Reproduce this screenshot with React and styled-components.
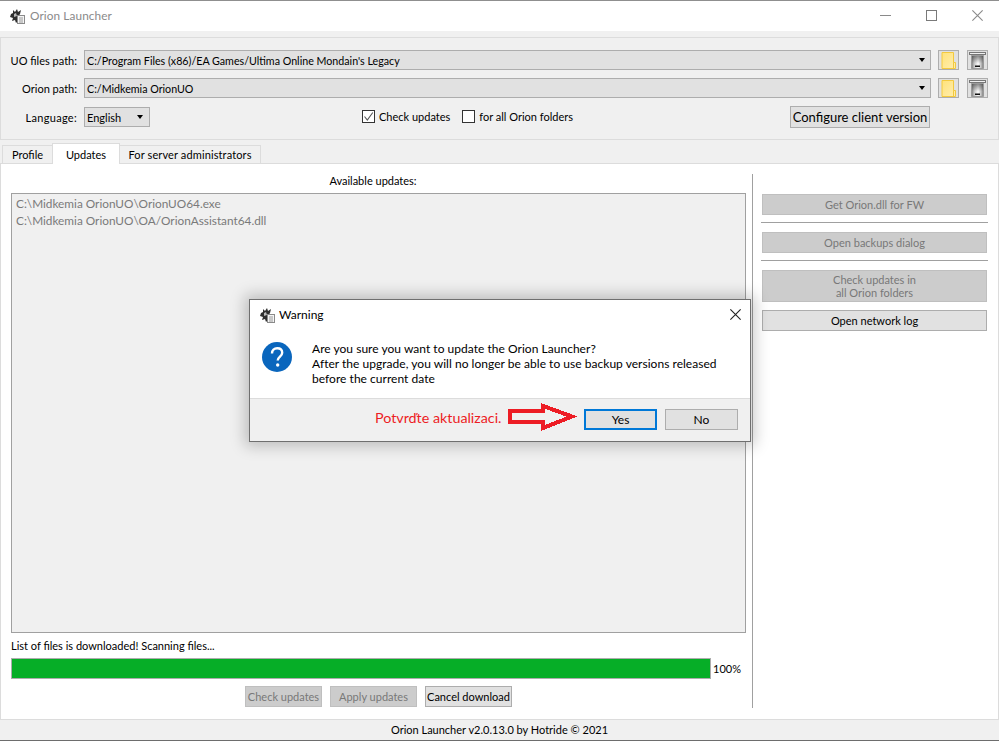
import React from "react";
import styled, { createGlobalStyle } from "styled-components";

const Global = createGlobalStyle`
  html, body { margin: 0; padding: 0; background: #f0f0f0; }
  body { font-family: "Lato", "Open Sans", "Liberation Sans", sans-serif; font-size: 11px; color: #000; }
  * { box-sizing: border-box; }
`;

const Win = styled.div`
  position: relative; width: 999px; height: 741px; display: flex; flex-direction: column;
  background: #f0f0f0; overflow: hidden; border-top: 1px solid #8f8f8f; border-bottom: 1px solid #6d6d6d;
`;
const TitleBar = styled.div`
  height: 30px; background: #fff; display: flex; align-items: center; padding-left: 10px; flex: none;
`;
const TitleText = styled.span`
  margin-left: 5px; font-size: 11.8px; color: #8a8a8a; margin-top: -1px; letter-spacing: .1px;
`;
const WinControls = styled.div`
  margin-left: auto; margin-right: -1px; display: flex; align-items: center; margin-top: -2px;
`;
const WinBtn = styled.div`
  width: 46px; height: 30px; display: flex; align-items: center; justify-content: center;
`;
const TopPanel = styled.div`
  flex: none; margin-top: 6px; height: 103px; border: 1px solid #dcdcdc;
  padding: 12px 10px 0 0; display: flex; flex-direction: column; gap: 8px;
`;
const Row = styled.div`
  display: flex; align-items: center; height: 20px;
`;
const LangRow = styled(Row)`
  height: 22px; position: relative;
`;
const Label = styled.label`
  width: 76px; text-align: right; flex: none; margin-right: 7px; white-space: nowrap;
  letter-spacing: ${p => p.$track || 0}px;
`;
const Combo = styled.div`
  flex: 1; height: 20px; background: #e1e1e1; border: 1px solid #adadad; display: flex; align-items: center;
  padding: 0 5px 0 2px; white-space: nowrap;
`;
const PathText = styled.span`
  font-size: 10.7px; line-height: 15px; padding-top: 1px;
`;
const LangCombo = styled(Combo)`
  flex: none; width: 66px; height: 20px; padding-right: 6px;
`;
const Arrow = styled.span`
  margin-left: auto; width: 0; height: 0; border-left: 3.5px solid transparent; border-right: 3.5px solid transparent;
  border-top: 4px solid #000;
`;
const IconBtn = styled.div`
  width: 21px; height: 20px; background: #e1e1e1; border: 1px solid #adadad; flex: none; margin-left: ${p => p.$gap}px;
  display: flex; align-items: center; justify-content: center;
`;
const Check = styled.div`
  display: flex; align-items: center; gap: 4px; white-space: nowrap; margin-left: ${p => p.$gap}px; margin-bottom: 2px;
`;
const Box = styled.span`
  width: 13px; height: 13px; background: #fff; border: 1px solid #333; display: flex; align-items: center; justify-content: center;
`;
const Configure = styled.div`
  margin-left: auto; margin-right: 58px; width: 140px; height: 22px; background: #e1e1e1; border: 1px solid #adadad;
  display: flex; align-items: center; justify-content: center; font-size: 13px; white-space: nowrap;
`;
const Tabs = styled.div`
  flex: none; display: flex; align-items: flex-end; height: 24px; padding-left: 2px; position: relative; z-index: 1; margin-bottom: -1px;
`;
const Tab = styled.div`
  height: ${p => (p.$active ? 21 : 19)}px; width: ${p => p.$w}px; display: flex; align-items: center; justify-content: center;
  background: ${p => (p.$active ? "#fff" : "#f0f0f0")}; border: 1px solid #dcdcdc; white-space: nowrap;
  margin-left: ${p => (p.$first ? 0 : -1)}px; letter-spacing: ${p => p.$track || 0}px;
  ${p => (p.$active ? "border-bottom: none; z-index: 1;" : "")}
`;
const Panel = styled.div`
  flex: none; height: 557px; background: #fff; border: 1px solid #dcdcdc; display: grid;
  grid-template-columns: 752px 1fr;
`;
const Left = styled.div`
  padding: 0 6px 0 10px; display: flex; flex-direction: column; border-right: 1px solid #a0a0a0; margin: 10px 0 11px;
`;
const Caption = styled.div`
  text-align: center; height: 19px; line-height: 14px; padding-right: 11px;
`;
const FileList = styled.div`
  height: 440px; background: #f0f0f0; border: 1px solid #a0a0a0; padding: 1px 4px; color: #7a7a7a; font-size: 11.8px; line-height: 17px; flex: none;
`;
const Status = styled.div`
  height: 25px; line-height: 14px; padding-top: 6px; white-space: nowrap; flex: none;
`;
const ProgressRow = styled.div`
  display: flex; align-items: center; gap: 2px; height: 21px; flex: none;
`;
const ProgressTrack = styled.div`
  width: 700px; height: 21px; border: 1px solid #adadad; background: #e6e6e6;
`;
const ProgressFill = styled.div`
  height: 100%; background: #06ae27;
`;
const Actions = styled.div`
  display: flex; justify-content: flex-start; padding-left: 234px; gap: 8px; margin-top: 7px; flex: none;
`;
const Btn = styled.div`
  height: ${p => p.$h || 21}px; width: ${p => p.$w ? p.$w + "px" : "auto"};
  margin-top: ${p => p.$top || 0}px;
  background: ${p => (p.$off ? "#cccccc" : "#e1e1e1")}; border: 1px solid ${p => (p.$off ? "#bfbfbf" : "#adadad")};
  color: ${p => (p.$off ? "#787878" : "#000")}; line-height: 13px; display: flex; align-items: center; justify-content: center;
  text-align: center; white-space: nowrap; flex: none;
`;
const Right = styled.div`
  padding: 30px 11px 0 9px; display: flex; flex-direction: column;
`;
const Rule = styled.div`
  height: 1px; background: #a0a0a0; margin: 7px -1px 9px;
`;
const Footer = styled.div`
  flex: 1; display: flex; align-items: center; justify-content: center; padding-bottom: 1px;
`;
const Dialog = styled.div`
  position: absolute; left: 249px; top: 298px; width: 502px; height: 143px; background: #fff; border: 1px solid #6f6f6f;
  box-shadow: 0 0 14px 4px rgba(0,0,0,.22); display: flex; flex-direction: column; z-index: 5;
`;
const DlgTitle = styled.div`
  height: 30px; display: flex; align-items: center; padding-left: 10px; flex: none;
`;
const DlgTitleText = styled.span`margin-left: 4px; font-size: 12px; margin-top: -1px;`;
const DlgClose = styled.div`
  margin-left: auto; margin-right: 9px; display: flex; margin-top: -2px;
`;
const DlgBody = styled.div`
  flex: 1; display: flex; padding: 12px 12px 0 12px;
`;
const Msg = styled.div`
  margin-left: 20px; font-size: 12px; letter-spacing: .03px; line-height: 15px; white-space: pre-line; margin-top: -1px;
`;
const DlgFoot = styled.div`
  height: 43px; flex: none; background: #f0f0f0; border-top: 1px solid #dcdcdc; display: flex; align-items: center; padding-left: 125px; position: relative;
`;
const Note = styled.span`
  color: #ed1c24; font-size: 14.3px; white-space: nowrap; width: 209px; flex: none; margin-top: -5px;
`;
const DlgBtn = styled.div`
  width: 73px; height: 21px; background: #e1e1e1; border: ${p => (p.$focus ? "2px solid #0078d7" : "1px solid #adadad")};
  display: flex; align-items: center; justify-content: center; font-size: 12px; margin-left: ${p => p.$gap}px; margin-top: -1px;
`;
const ArrowMark = styled.svg`
  position: absolute; left: 258px; top: 3px;
`;

const AppIcon = () => (
  <svg width="15" height="15" viewBox="0 0 15 15" style={{ flex: "none" }}>
    <path d="M1 5 L3 4 L3 1 L5 3 L7 0 L8 3 L11 1 L10 5 L8 8 L8 12 L6 14 L5 11 L2 12 L3 9 L0 8 Z" fill="#2e2e2e" />
    <path d="M4 5 L6 4 L7 7 L4 8 Z" fill="#b9b9b9" />
    <rect x="7.5" y="6.5" width="7" height="8" fill="#f4f4f4" stroke="#8a8a8a" />
    <path d="M9 9h4M9 11h4M9 13h4" stroke="#9a9a9a" strokeWidth="1" />
  </svg>
);
const Folder = ({ id }) => (
  <svg width="15" height="17" viewBox="0 0 15 17">
    <defs>
      <linearGradient id={id} x1="0" x2="1" y1="0" y2="1">
        <stop offset="0" stopColor="#ffe27a" />
        <stop offset="1" stopColor="#ffeeb0" />
      </linearGradient>
    </defs>
    <path d="M1 .5H12.5V10.5H14.5V16.5H1Z" fill={`url(#${id})`} stroke="#f3c93e" />
    <path d="M12.5 10.5V16.5" stroke="#f3c93e" />
  </svg>
);
const Trash = ({ id }) => (
  <svg width="17" height="17" viewBox="0 0 17 17">
    <defs>
      <linearGradient id={id} x1="0" x2="1" y1="0" y2="0">
        <stop offset="0" stopColor="#777" />
        <stop offset=".22" stopColor="#c4c4c4" />
        <stop offset=".55" stopColor="#fcfcfc" />
        <stop offset=".8" stopColor="#c0c0c0" />
        <stop offset="1" stopColor="#777" />
      </linearGradient>
      <linearGradient id={`${id}s`} x1="0" x2="0" y1="0" y2="1">
        <stop offset="0" stopColor="#333" stopOpacity=".55" />
        <stop offset=".6" stopColor="#333" stopOpacity="0" />
      </linearGradient>
    </defs>
    <rect x=".5" y=".5" width="16" height="2" fill="#efefef" stroke="#777" />
    <path d="M2.5 3.5H14.5V16.500H2.5Z" fill={`url(#${id})`} stroke="#9a9a9a" />
    <rect x="3" y="4" width="11" height="12" fill={`url(#${id}s)`} />
    <rect x="6" y="13.500" width="5" height="1.500" fill="#111" />
  </svg>
);
const Cross = ({ c, s }) => (
  <svg width={s} height={s} viewBox="0 0 10 10"><path d="M.3.3 9.7 9.7M9.7.3.3 9.7" stroke={c} strokeWidth="1" fill="none" /></svg>
);

export default function App() {
  return (
    <Win>
      <Global />
      <TitleBar>
        <AppIcon />
        <TitleText>Orion Launcher</TitleText>
        <WinControls>
          <WinBtn><svg width="11" height="1"><rect width="11" height="1" fill="#8a8a8a" /></svg></WinBtn>
          <WinBtn><svg width="11" height="11"><rect x=".5" y=".5" width="10" height="10" fill="none" stroke="#7a7a7a" /></svg></WinBtn>
          <WinBtn><Cross c="#8a8a8a" s={11} /></WinBtn>
        </WinControls>
      </TitleBar>
      <TopPanel>
        <Row>
          <Label>UO files path:</Label>
          <Combo><PathText>C:/Program Files (x86)/EA Games/Ultima Online Mondain's Legacy</PathText><Arrow /></Combo>
          <IconBtn $gap={7}><Folder id="f1" /></IconBtn>
          <IconBtn $gap={8}><Trash id="t1" /></IconBtn>
        </Row>
        <Row>
          <Label>Orion path:</Label>
          <Combo><PathText>C:/Midkemia OrionUO</PathText><Arrow /></Combo>
          <IconBtn $gap={7}><Folder id="f2" /></IconBtn>
          <IconBtn $gap={8}><Trash id="t2" /></IconBtn>
        </Row>
        <LangRow>
          <Label $track={0.3}>Language:</Label>
          <LangCombo>English<Arrow /></LangCombo>
          <Check $gap={212}>
            <Box><svg width="11" height="11" viewBox="0 0 11 11"><path d="M1.5 5.5 4.3 9 9.8 1.5" fill="none" stroke="#555" strokeWidth="1.1" /></svg></Box>
            Check updates
          </Check>
          <Check $gap={12}><Box />for all Orion folders</Check>
          <Configure>Configure client version</Configure>
        </LangRow>
      </TopPanel>
      <Tabs>
        <Tab $w={51} $first>Profile</Tab>
        <Tab $w={68} $active>Updates</Tab>
        <Tab $w={142} $track={0.12}>For server administrators</Tab>
      </Tabs>
      <Panel>
        <Left>
          <Caption>Available updates:</Caption>
          <FileList>
            C:\Midkemia OrionUO\OrionUO64.exe<br />
            C:\Midkemia OrionUO\OA/OrionAssistant64.dll
          </FileList>
          <Status>List of files is downloaded! Scanning files...</Status>
          <ProgressRow>
            <ProgressTrack><ProgressFill style={{ width: "100%" }} /></ProgressTrack>
            100%
          </ProgressRow>
          <Actions>
            <Btn $off $w={77}>Check updates</Btn>
            <Btn $off $w={87}>Apply updates</Btn>
            <Btn $w={87}>Cancel download</Btn>
          </Actions>
        </Left>
        <Right>
          <Btn $off>Get Orion.dll for FW</Btn>
          <Rule />
          <Btn $off>Open backups dialog</Btn>
          <Rule />
          <Btn $off $h={32}>Check updates in<br />all Orion folders</Btn>
          <Btn $top={8}>Open network log</Btn>
        </Right>
      </Panel>
      <Footer>Orion Launcher v2.0.13.0 by Hotride © 2021</Footer>
      <Dialog>
        <DlgTitle>
          <AppIcon />
          <DlgTitleText>Warning</DlgTitleText>
          <DlgClose><Cross c="#222" s={11} /></DlgClose>
        </DlgTitle>
        <DlgBody>
          <svg width="30" height="30" viewBox="0 0 30 30" style={{ flex: "none" }}>
            <circle cx="15" cy="15" r="15" fill="#0a66bd" />
            <path d="M10 11.500c0-3.200 2.200-5.200 5.200-5.200s5 1.800 5 4.500c0 3.700-4.500 4-4.500 7.800" fill="none" stroke="#fff" strokeWidth="2.400" />
            <circle cx="15.700" cy="23" r="1.700" fill="#fff" />
          </svg>
          <Msg>{"Are you sure you want to update the Orion Launcher?\nAfter the upgrade, you will no longer be able to use backup versions released\nbefore the current date"}</Msg>
        </DlgBody>
        <DlgFoot>
          <Note>Potvrďte aktualizaci.</Note>
          <DlgBtn $focus $gap={0}>Yes</DlgBtn>
          <DlgBtn $gap={8}>No</DlgBtn>
          <ArrowMark width="72" height="32" viewBox="0 0 72 32" shapeRendering="crispEdges">
            <path d="M2 9H35V4L64 14.500 35 26V20H2Z" fill="none" stroke="#ed1c24" strokeWidth="4" strokeLinejoin="miter" />
          </ArrowMark>
        </DlgFoot>
      </Dialog>
    </Win>
  );
}
